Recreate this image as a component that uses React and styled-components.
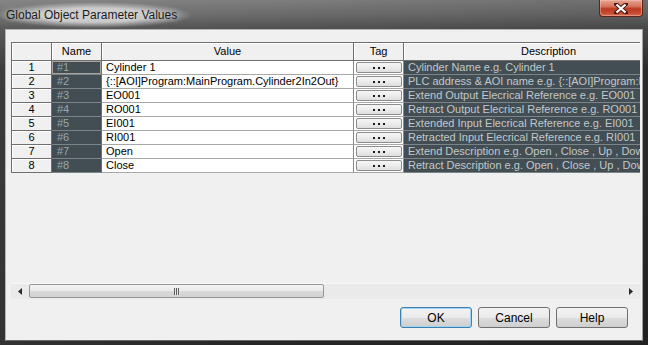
import styled, { createGlobalStyle, css } from 'styled-components';

const GlobalStyle = createGlobalStyle`
  html, body {
    margin: 0;
    padding: 0;
  }
  body {
    width: 648px;
    height: 345px;
    overflow: hidden;
    font-family: "Liberation Sans", Arial, sans-serif;
  }
`;

const Window = styled.div`
  width: 648px;
  height: 345px;
  box-sizing: border-box;
  padding: 0 5px 4px 5px;
  display: flex;
  flex-direction: column;
  background:
    linear-gradient(90deg, rgba(255,255,255,0.06) 0, rgba(0,0,0,0) 40%, rgba(0,0,0,0.12) 100%),
    linear-gradient(180deg, #7e7e7e 0px, #6c6c6c 14px, #505050 29px, #303030 70px, #262626 100%);
`;

const TitleBar = styled.div`
  height: 29px;
  flex: none;
  display: flex;
  justify-content: space-between;
  align-items: flex-start;
`;

const TitleText = styled.div`
  margin: 2px 0 0 -9px;
  padding: 6px 16px 6px 10px;
  font-size: 12px;
  color: #1c1c1c;
  background: radial-gradient(closest-side, rgba(205,205,205,0.95) 55%, rgba(205,205,205,0) 100%);
  text-shadow: 0 0 6px rgba(255,255,255,0.7);
  white-space: nowrap;
`;

const CloseButton = styled.div`
  width: 44px;
  height: 17px;
  box-sizing: border-box;
  border: 1px solid #5e2418;
  border-top: none;
  border-radius: 0 0 4px 4px;
  display: flex;
  align-items: center;
  justify-content: center;
  background: linear-gradient(180deg, #e6a595 0%, #d8735d 40%, #b83a22 55%, #c44a2e 80%, #d86c4c 100%);
  box-shadow: inset 0 0 0 1px rgba(255,200,190,0.45);
`;

const Client = styled.div`
  flex: 1;
  min-height: 0;
  box-sizing: border-box;
  border: 1px solid;
  border-color: #b4b4b4 #a0a0a0 #6a6a6a #b4b4b4;
  background: #f0f0f0;
  padding: 12px 2px 0 5px;
  display: flex;
  flex-direction: column;
`;

const GridViewport = styled.div`
  height: 241px;
  overflow: hidden;
  flex: none;
`;

const Grid = styled.div`
  display: grid;
  grid-template-columns: 40px 50px 252px 50px 290px;
  grid-template-rows: 18px;
  grid-auto-rows: 14px;
  width: max-content;
  border-top: 1px solid #6f6f6f;
  border-left: 1px solid #6f6f6f;
  font-size: 11px;
`;

const kinds = {
  head: css`
    background: #f0f0f0;
    color: #000;
    justify-content: center;
    border-right: 1px solid #6f6f6f;
    border-bottom: 1px solid #6f6f6f;
    box-shadow: inset 1px 1px 0 #ffffff;
  `,
  name: css`
    background: #424e54;
    color: #9ea6a9;
    padding-left: 5px;
    border-right: 1px solid #6f6f6f;
    border-bottom: 1px solid #7b8487;
  `,
  value: css`
    background: #ffffff;
    color: #000;
    padding-left: 4px;
    border-right: 1px solid #8a8a8a;
    border-bottom: 1px solid #a8a8a8;
  `,
  tag: css`
    background: #ffffff;
    justify-content: center;
    border-right: 1px solid #8a8a8a;
    border-bottom: 1px solid #a8a8a8;
  `,
  desc: css`
    background: #424e54;
    color: #c3c8ca;
    padding-left: 4px;
    border-bottom: 1px solid #7b8487;
  `,
};

const Cell = styled.div`
  display: flex;
  align-items: center;
  overflow: hidden;
  white-space: nowrap;
  line-height: 13px;
  ${(p) => kinds[p.$kind]}
  ${(p) => p.$selected && css`
    box-shadow: inset 0 0 0 1px #a9a39b;
  `}
`;

const TagButton = styled.div`
  width: 46px;
  height: 11px;
  box-sizing: border-box;
  border: 1px solid #8d8d8d;
  border-radius: 2px;
  background: linear-gradient(180deg, #f6f6f6 0%, #ececec 50%, #dedede 100%);
  display: flex;
  align-items: center;
  justify-content: center;
  gap: 3px;
`;

const Dot = styled.span`
  width: 2px;
  height: 2px;
  background: #1a1a1a;
`;

const ScrollBar = styled.div`
  height: 16px;
  flex: none;
  display: flex;
  background: #eaeaea;
  border-top: 1px solid #f7f7f7;
  box-sizing: border-box;
  width: 629px;
`;

const ArrowButton = styled.div`
  width: 18px;
  display: flex;
  align-items: center;
  justify-content: center;
`;

const Track = styled.div`
  flex: 1;
  display: flex;
  align-items: stretch;
  padding: 0 0 1px 0;
`;

const Thumb = styled.div`
  width: 295px;
  box-sizing: border-box;
  border: 1px solid #979797;
  border-radius: 2px;
  background: linear-gradient(180deg, #f4f4f4 0%, #e9e9e9 50%, #d9d9d9 51%, #d2d2d2 100%);
  display: flex;
  align-items: center;
  justify-content: center;
  gap: 1px;
`;

const Grip = styled.span`
  width: 1px;
  height: 7px;
  background: #5c5c5c;
  box-shadow: 1px 0 0 #e8e8e8;
`;

const ButtonRow = styled.div`
  margin-top: 8px;
  padding-right: 12px;
  display: flex;
  justify-content: flex-end;
  gap: 6px;
`;

const DialogButton = styled.button`
  width: 72px;
  height: 21px;
  box-sizing: border-box;
  border: 1px solid #707070;
  border-radius: 3px;
  background: linear-gradient(180deg, #f2f2f2 0%, #ebebeb 50%, #dddddd 51%, #cfcfcf 100%);
  font-family: "Liberation Sans", Arial, sans-serif;
  font-size: 12px;
  color: #000;
  padding: 0;
  ${(p) => p.$default && css`
    border-color: #3c7fb1;
    box-shadow: inset 0 0 0 1px #9fd5f2;
  `}
`;

const rows = [
  ['#1', 'Cylinder 1', 'Cylinder Name e.g. Cylinder 1'],
  ['#2', '{::[AOI]Program:MainProgram.Cylinder2In2Out}', 'PLC address & AOI name e.g. {::[AOI]Program:MainProgram.Cylinder2In2Out}'],
  ['#3', 'EO001', 'Extend Output Elecrical Reference e.g. EO001'],
  ['#4', 'RO001', 'Retract Output Elecrical Reference e.g. RO001'],
  ['#5', 'EI001', 'Extended Input Elecrical Reference e.g. EI001'],
  ['#6', 'RI001', 'Retracted Input Elecrical Reference e.g. RI001'],
  ['#7', 'Open', 'Extend Description e.g. Open , Close , Up , Down'],
  ['#8', 'Close', 'Retract Description e.g. Open , Close , Up , Down'],
];

const App = () => {
  return (
    <>
      <GlobalStyle />
      <Window>
        <TitleBar>
          <TitleText>Global Object Parameter Values</TitleText>
          <CloseButton>
            <svg width="14" height="11" viewBox="0 0 14 11">
              <path d="M2 1 L12 10 M12 1 L2 10" stroke="#4a1a12" strokeWidth="4" strokeLinecap="square" />
              <path d="M2.5 1.5 L11.5 9.5 M11.5 1.5 L2.5 9.5" stroke="#ffffff" strokeWidth="2.2" />
            </svg>
          </CloseButton>
        </TitleBar>
        <Client>
          <GridViewport>
            <Grid>
              <Cell $kind="head" />
              <Cell $kind="head">Name</Cell>
              <Cell $kind="head">Value</Cell>
              <Cell $kind="head">Tag</Cell>
              <Cell $kind="head">Description</Cell>
              {rows.map((r, idx) => (
                <>
                  <Cell key={'h' + idx} $kind="head">{idx + 1}</Cell>
                  <Cell key={'n' + idx} $kind="name" $selected={idx === 0}>{r[0]}</Cell>
                  <Cell key={'v' + idx} $kind="value">{r[1]}</Cell>
                  <Cell key={'t' + idx} $kind="tag">
                    <TagButton><Dot /><Dot /><Dot /></TagButton>
                  </Cell>
                  <Cell key={'d' + idx} $kind="desc">{r[2]}</Cell>
                </>
              ))}
            </Grid>
          </GridViewport>
          <ScrollBar>
            <ArrowButton>
              <svg width="4" height="7" viewBox="0 0 4 7"><path d="M4 0 L0 3.5 L4 7 Z" fill="#2a2a2a" /></svg>
            </ArrowButton>
            <Track>
              <Thumb><Grip /><Grip /><Grip /></Thumb>
            </Track>
            <ArrowButton>
              <svg width="4" height="7" viewBox="0 0 4 7"><path d="M0 0 L4 3.5 L0 7 Z" fill="#2a2a2a" /></svg>
            </ArrowButton>
          </ScrollBar>
          <ButtonRow>
            <DialogButton $default>OK</DialogButton>
            <DialogButton>Cancel</DialogButton>
            <DialogButton>Help</DialogButton>
          </ButtonRow>
        </Client>
      </Window>
    </>
  );
};

export default App;
